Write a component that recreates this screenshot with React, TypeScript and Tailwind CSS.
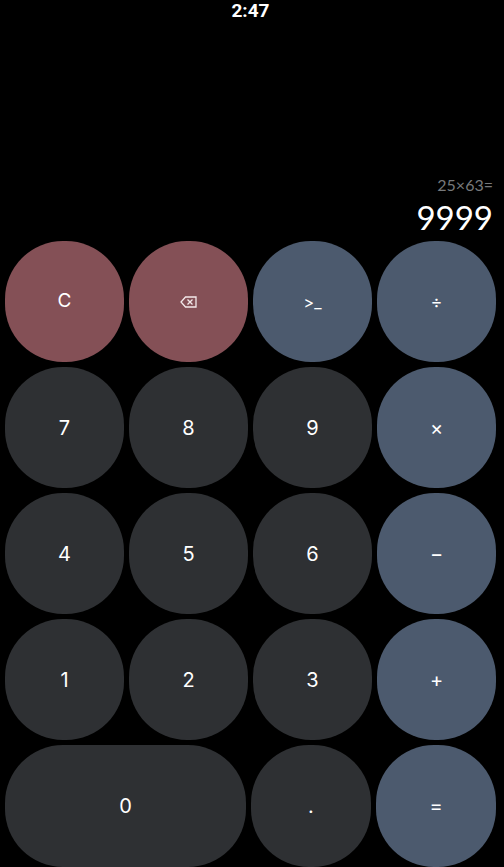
const red = "bg-[#845056]";
const blue = "bg-[#4c5a6e]";
const dark = "bg-[#2e3033]";

function Key({ label, color, size = "text-[20px]" }: { label: React.ReactNode; color: string; size?: string }) {
  return (
    <button className={`flex items-center justify-center rounded-[58px] text-white font-['Inter',sans-serif] font-normal ${color} ${size}`}>
      {label}
    </button>
  );
}

function Backspace() {
  return (
    <svg width="17" height="12" viewBox="0 0 17 12" fill="none" stroke="#f3e9ea" strokeWidth="1.3">
      <path d="M5.5 1H16V11H5.5L1 6z" />
      <path d="M7.5 3.5l5 5M12.5 3.5l-5 5" />
    </svg>
  );
}

const rows = [
  ["7", "8", "9", "×"],
  ["4", "5", "6", "−"],
  ["1", "2", "3", "+"],
];

export default function App() {
  return (
    <div className="flex h-[867px] w-[504px] flex-col overflow-hidden bg-black font-['Lato',sans-serif]">
      <div className="flex h-[22px] items-center justify-center pr-[3px] text-[19px] font-bold text-white font-['Roboto',sans-serif]">
        2:47
      </div>

      <div className="flex flex-1 flex-col items-end justify-end pr-[11px] pb-[3px]">
        <div className="text-[16px] leading-[24px] text-[#77797b]">25×63=</div>
        <div className="text-[33px] leading-[41px] text-white">9999</div>
      </div>

      <div className="flex flex-col gap-[5px] pr-[8px] pl-[5px]">
        <div className="grid h-[121px] grid-cols-4 gap-[5px]">
          <Key label="C" color={red} size="text-[19px]" />
          <Key label={<Backspace />} color={red} />
          <Key label=">_" color={blue} size="text-[16px]" />
          <Key label="÷" color={blue} size="text-lg" />
        </div>
        {rows.map((row) => (
          <div key={row[0]} className="grid h-[121px] grid-cols-4 gap-[5px]">
            {row.map((k, i) => (
              <Key key={k} label={k} color={i === 3 ? blue : dark} />
            ))}
          </div>
        ))}
        <div className="grid h-[122px] grid-cols-[241px_120px_120px] gap-[5px]">
          <Key label="0" color={dark} />
          <Key label="." color={dark} />
          <Key label="=" color={blue} />
        </div>
      </div>
    </div>
  );
}
